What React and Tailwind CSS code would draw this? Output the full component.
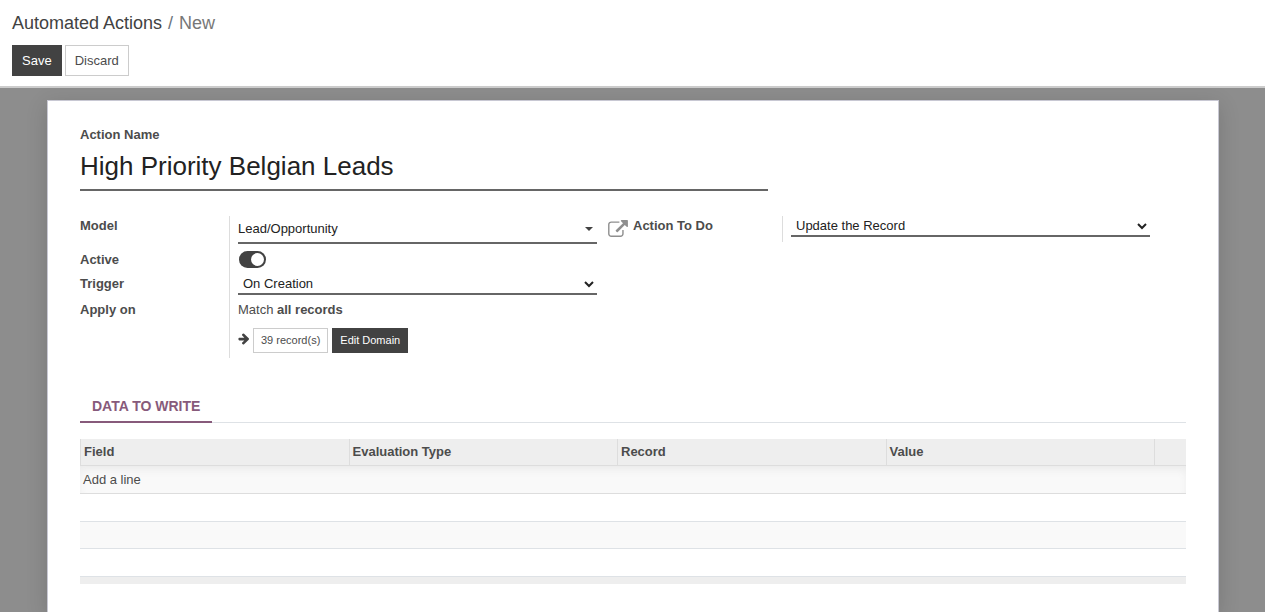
// src/App.jsx
import React, { useState } from "react";

const columns = ["Field", "Evaluation Type", "Record", "Value"];

function ArrowIcon() {
  return (
    <svg viewBox="64 192 1536 1536" className="w-[11px] h-3 mb-1 fill-[#424242]" aria-hidden="true">
      <path d="M1600 960q0 54-37 91l-651 651q-39 37-91 37-51 0-90-37l-75-75q-38-38-38-91t38-91l293-293h-704q-52 0-84.5-37.5t-32.5-90.5v-128q0-53 32.5-90.5t84.5-37.5h704l-293-294q-38-36-38-90t38-90l75-75q38-38 90-38 53 0 91 38l651 651q37 35 37 90z" />
    </svg>
  );
}

function ExternalLinkIcon() {
  return (
    <svg viewBox="0 0 1792 1536" className="w-5 h-[17px] fill-[#8f8f8f]" aria-hidden="true">
      <path d="M1408 928v320q0 119-84.5 203.5t-203.5 84.5h-832q-119 0-203.5-84.5t-84.5-203.5v-832q0-119 84.5-203.5t203.5-84.5h704q14 0 23 9t9 23v64q0 14-9 23t-23 9h-704q-66 0-113 47t-47 113v832q0 66 47 113t113 47h832q66 0 113-47t47-113v-320q0-14 9-23t23-9h64q14 0 23 9t9 23zm384-864v512q0 26-19 45t-45 19-45-19l-176-176-652 652q-10 10-23 10t-23-10l-114-114q-10-10-10-23t10-23l652-652-176-176q-19-19-19-45t19-45 45-19h512q26 0 45 19t19 45z" />
    </svg>
  );
}

// One label / field line of a form group
function Row({ label, htmlFor, height, side, children }) {
  return (
    <div className={`flex ${height}`}>
      <label htmlFor={htmlFor} className="w-[149px] shrink-0 font-bold leading-5 text-[#4c4c4c]">
        {label}
      </label>
      <div className="flex-1 min-w-0 border-l border-[#dddddd] pl-2 flex items-start">
        <div className="flex-1 min-w-0">{children}</div>
        <div className="w-9 shrink-0">{side}</div>
      </div>
    </div>
  );
}

function Select({ id, options }) {
  return (
    <select
      id={id}
      className="block w-full h-[21px] pl-px border-b-2 border-[#666666] bg-transparent text-[#222222] outline-none"
    >
      {options.map((option) => (
        <option key={option}>{option}</option>
      ))}
    </select>
  );
}

function App() {
  const [name, setName] = useState("High Priority Belgian Leads");
  const [model, setModel] = useState("Lead/Opportunity");
  const [active, setActive] = useState(true);

  return (
    <div className="min-h-screen flex flex-col bg-[#8d8d8d] text-[13px] text-[#4c4c4c] font-['Liberation_Sans',Arial,sans-serif]">
      {/* Control panel */}
      <header className="bg-white border-b-2 border-[#cccccc] px-3 pt-[9px] pb-[10px]">
        <nav className="flex gap-[6px] text-lg leading-7">
          <a href="#actions" className="text-[#424242]">Automated Actions</a>
          <span className="text-[#6c757d]">/</span>
          <span className="text-[#777777]">New</span>
        </nav>
        <div className="flex gap-[3px] mt-2">
          <button className="h-[31px] px-[9px] bg-[#424242] border border-[#424242] text-white">Save</button>
          <button className="h-[31px] px-[9px] bg-white border border-[#cccccc]">Discard</button>
        </div>
      </header>

      {/* Form sheet */}
      <main className="flex-1 mt-3 ml-[47px] mr-[46px] px-8 pt-6 pb-7 bg-white border border-b-0 border-[#c8c8d3] shadow-[0_5px_20px_rgba(0,0,0,0.15)]">
        <div className="w-[688px] max-w-full">
          <label htmlFor="name" className="block font-bold leading-5">Action Name</label>
          <input
            id="name"
            value={name}
            onChange={(e) => setName(e.target.value)}
            className="block w-full h-[46px] pb-px text-[26px] text-[#222222] border-b-2 border-[#666666] outline-none"
          />
        </div>

        <div className="grid grid-cols-2 items-start mt-[25px]">
          <div>
            <Row
              label="Model"
              htmlFor="model"
              height="h-[34px]"
              side={
                <button aria-label="External link" className="block ml-[11px] mt-1">
                  <ExternalLinkIcon />
                </button>
              }
            >
              <div className="flex items-center h-7 border-b-2 border-[#666666]">
                <input
                  id="model"
                  value={model}
                  onChange={(e) => setModel(e.target.value)}
                  className="flex-1 min-w-0 text-[#222222] outline-none"
                />
                <button aria-label="Open model list" className="px-1">
                  <svg viewBox="0 0 8 4" className="w-2 h-1 fill-[#424242]" aria-hidden="true">
                    <path d="M0 0h8L4 4z" />
                  </svg>
                </button>
              </div>
            </Row>
            <Row label="Active" htmlFor="active" height="h-6">
              <label className="flex w-[27px] h-[17px] mt-px ml-px rounded-full bg-[#424242] cursor-pointer">
                <input
                  id="active"
                  type="checkbox"
                  checked={active}
                  onChange={(e) => setActive(e.target.checked)}
                  className="peer sr-only"
                />
                <span className="size-[13px] m-[2px] peer-checked:ml-3 rounded-full bg-white" />
              </label>
            </Row>
            <Row label="Trigger" htmlFor="trigger" height="h-[26px]">
              <Select id="trigger" options={["On Creation", "On Update", "On Deletion"]} />
            </Row>
            <Row label="Apply on" htmlFor="domain" height="h-[58px]">
              <p className="leading-5">
                Match <b>all records</b>
              </p>
              <div className="flex items-center gap-1 mt-2 text-[11px]">
                <ArrowIcon />
                <button className="h-[25px] px-[7px] bg-white border border-[#cccccc]">39 record(s)</button>
                <button id="domain" className="h-[25px] px-[7px] bg-[#424242] border border-[#424242] text-white">
                  Edit Domain
                </button>
              </div>
            </Row>
          </div>
          <div>
            <Row label="Action To Do" htmlFor="todo" height="h-[26px]">
              <Select id="todo" options={["Update the Record", "Create a new Record", "Send Email"]} />
            </Row>
          </div>
        </div>

        {/* Notebook */}
        <div role="tablist" className="flex mt-[34px] shadow-[inset_0_-1px_0_#dee2e6]">
          <button
            role="tab"
            aria-selected="true"
            className="h-[31px] px-3 pb-[2px] border-b-2 border-[#875a7b] text-sm font-bold text-[#875a7b]"
          >
            DATA TO WRITE
          </button>
        </div>

        <table className="w-full mt-4 table-fixed border-collapse">
          <thead>
            <tr className="h-[27px] bg-[#eeeeee] shadow-[inset_0_-1px_0_#dddddd]">
              {columns.map((column) => (
                <th key={column} className="p-0 text-left align-top">
                  <div className="h-[26px] pl-[3px] border-l border-[#dddddd] leading-[26px]">{column}</div>
                </th>
              ))}
              <th className="w-8 p-0 align-top" aria-label="Delete">
                <div className="h-[26px] border-l border-[#dddddd]" />
              </th>
            </tr>
          </thead>
          <tbody>
            <tr className="h-7 bg-[#f9f9f9] shadow-[inset_0_-1px_0_#dddddd,inset_0_5px_10px_-2px_#e9e9e9]">
              <td colSpan={5} className="p-0 pl-[3px]">
                <a href="#add">Add a line</a>
              </td>
            </tr>
            <tr className="h-7 shadow-[inset_0_-1px_0_#dee2e6]">
              <td colSpan={5} />
            </tr>
            <tr className="h-[27px] bg-[#f9f9f9] shadow-[inset_0_-1px_0_#dee2e6]">
              <td colSpan={5} />
            </tr>
            <tr className="h-7 shadow-[inset_0_-1px_0_#dee2e6]">
              <td colSpan={5} />
            </tr>
          </tbody>
          <tfoot>
            <tr className="h-[7px] bg-[#eeeeee]">
              <td colSpan={5} className="p-0" />
            </tr>
          </tfoot>
        </table>
      </main>
    </div>
  );
}

export default App;
